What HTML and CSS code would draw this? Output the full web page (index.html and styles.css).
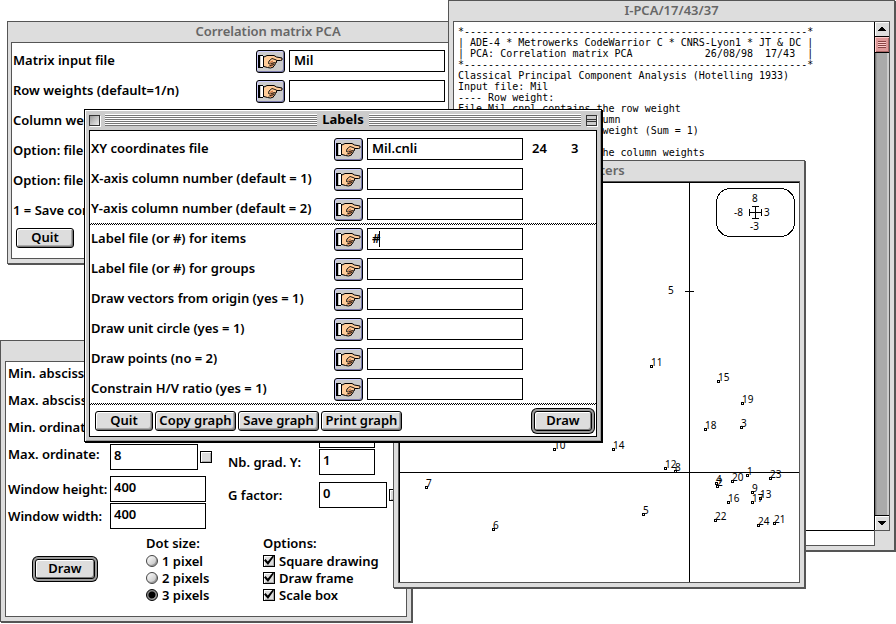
FILE: index.html
```html
<!DOCTYPE html>
<html lang="en">
<head>
<meta charset="utf-8">
<title>Labels</title>
<link rel="stylesheet" href="styles.css">
</head>
<body>
<svg class="defs" aria-hidden="true">
  <symbol id="hand" viewBox="0 0 25 15">
    <path fill="#000" d="M0 1h2v13h-2z"/>
    <path fill="#fff" d="M3 2h2v11h-2z"/>
    <path fill="#000" d="M2 1h3v1h-3zM2 13h3v1h-3zM5 2h1v11h-1z"/>
    <path fill="#ffcc99" stroke="#000" stroke-linejoin="round" d="M6 3L9 1.5H16L18.500 3L24 4V6L22.500 6.500H18.500V8.500L17 9.500V11L15.500 12V13L12.500 14L9.500 13.500L6 12.500"/>
    <path fill="none" stroke="#c63" d="M12 8.500L15 7M12.500 10.500L16 9M12 12.500L15 11.500"/>
    <path fill="none" stroke="#000" stroke-width=".9" d="M14 4.500L18.500 6M14 4.500L11 7L10.500 9.500L12 10M12.500 9.500L17.500 8.500M12 11.500L16 10.500M11.500 11.500L11 12.500"/>
  </symbol>
</svg>

<main class="desktop">

  <section class="window win-pca">
    <h2 class="titlebar">Correlation matrix PCA</h2>
    <div class="content form">
      <div class="row"><label for="a1">Matrix input file</label><button class="pick" aria-label="Choose matrix input file"><svg><use href="#hand"/></svg></button><input id="a1" type="text" value="Mil"></div>
      <div class="row"><label for="a2">Row weights (default=1/n)</label><button class="pick" aria-label="Choose row weights"><svg><use href="#hand"/></svg></button><input id="a2" type="text"></div>
      <div class="row"><span>Column weights</span></div>
      <div class="row"><span>Option: file for</span></div>
      <div class="row"><span>Option: file for</span></div>
      <div class="row"><span>1 = Save correlation</span></div>
      <div class="actions"><button class="btn">Quit</button></div>
    </div>
  </section>

  <section class="window win-log">
    <h2 class="titlebar">I-PCA/17/43/37</h2>
    <div class="content log">
      <pre>*---------------------------------------------------------*
| ADE-4 * Metrowerks CodeWarrior C * CNRS-Lyon1 * JT &amp; DC |
| PCA: Correlation matrix PCA            26/08/98  17/43  |
*---------------------------------------------------------*
Classical Principal Component Analysis (Hotelling 1933)
Input file: Mil
---- Row weight:
File Mil.cnpl contains the row weight
                     column
                        weight (Sum = 1)

                       the column weights</pre>
      <div class="scrollbar">
        <button class="arrow" aria-label="Scroll up"><svg viewBox="0 0 8 4"><path d="M3 0h2v1h1v1h1v1h1v1h-8v-1h1v-1h1v-1h1z"/></svg></button>
        <div class="thumb"></div>
        <div class="track"></div>
        <button class="arrow down" aria-label="Scroll down"><svg viewBox="0 0 8 4"><path d="M0 0h8v1h-1v1h-1v1h-1v1h-2v-1h-1v-1h-1v-1h-1z"/></svg></button>
      </div>
      <div class="status"></div>
      <div class="corner"></div>
    </div>
  </section>

  <section class="window win-options">
    <h2 class="titlebar"></h2>
    <div class="content">
      <div class="columns">
        <div class="col-left">
          <div class="opt top"><label for="d1">Min. abscissa:</label><input id="d1" class="box" type="text"></div>
          <div class="opt top"><label for="d2">Max. abscissa:</label><input id="d2" class="box" type="text"></div>
          <div class="opt top"><label for="d3">Min. ordinate:</label><input id="d3" class="box" type="text"></div>
          <div class="opt top"><label for="d4">Max. ordinate:</label><input id="d4" class="box" type="text" value="8"><input type="checkbox" class="check" aria-label="Fix maximum ordinate"></div>
          <div class="opt spaced"><label for="d5">Window height:</label><input id="d5" class="box wide" type="text" value="400"></div>
          <div class="opt"><label for="d6">Window width:</label><input id="d6" class="box wide" type="text" value="400"></div>
        </div>
        <div class="col-right">
          <div class="opt"><label for="d7">Nb. grad. X:</label><input id="d7" class="box small" type="text"></div>
          <div class="opt"><label for="d8">Nb. grad. Y:</label><input id="d8" class="box small" type="text" value="1"></div>
          <div class="opt spaced"><label for="d9">G factor:</label><input id="d9" class="box medium" type="text" value="0"><input type="checkbox" class="check" aria-label="Fix G factor"></div>
        </div>
      </div>
      <div class="choices">
        <button class="btn default roomy">Draw</button>
        <fieldset class="dots">
          <legend>Dot size:</legend>
          <label><input type="radio" name="dot" class="radio">1 pixel</label>
          <label><input type="radio" name="dot" class="radio">2 pixels</label>
          <label><input type="radio" name="dot" class="radio" checked>3 pixels</label>
        </fieldset>
        <fieldset>
          <legend>Options:</legend>
          <label><input type="checkbox" class="check" checked>Square drawing</label>
          <label><input type="checkbox" class="check" checked>Draw frame</label>
          <label><input type="checkbox" class="check" checked>Scale box</label>
        </fieldset>
      </div>
    </div>
  </section>

  <section class="window win-plot">
    <h2 class="titlebar">Scatters</h2>
    <div class="content">
      <svg class="plot" viewBox="0 0 400 400" role="img" aria-label="Scatter plot of the items">
        <g class="lines">
          <path d="M.5 400V.5H400M290.5 0V400M0 290.5H400M286 109.5h9"/>
          <rect x="317.5" y="6.5" width="78" height="48" rx="14"/>
          <path d="M350.5 30.5h12M350.5 27v7M362.5 27v7M356.5 24v13M353 24.5h7M353 36.5h7"/>
        </g>
        <text x="269" y="112">5</text>
        <text x="353" y="20">8</text>
        <text x="335" y="34">-8</text>
        <text x="365" y="34">3</text>
        <text x="351" y="48">-3</text>
        <g id="points"></g>
      </svg>
    </div>
  </section>

  <section class="window active win-labels">
    <div class="titlebar">
      <button class="close" aria-label="Close"></button>
      <span class="stripes"></span>
      <h2>Labels</h2>
      <span class="stripes"></span>
      <button class="shade" aria-label="Collapse"></button>
    </div>
    <div class="content form">
      <div class="row"><label for="e1">XY coordinates file</label><button class="pick" aria-label="Choose XY coordinates file"><svg><use href="#hand"/></svg></button><input id="e1" type="text" value="Mil.cnli"><span class="dims"><span>24</span><span>3</span></span></div>
      <div class="row"><label for="e2">X-axis column number (default = 1)</label><button class="pick" aria-label="Choose X-axis column"><svg><use href="#hand"/></svg></button><input id="e2" type="text"></div>
      <div class="row"><label for="e3">Y-axis column number (default = 2)</label><button class="pick" aria-label="Choose Y-axis column"><svg><use href="#hand"/></svg></button><input id="e3" type="text"></div>
      <hr>
      <div class="row"><label for="e4">Label file (or #) for items</label><button class="pick" aria-label="Choose item label file"><svg><use href="#hand"/></svg></button><span class="focused"><input id="e4" type="text" value="#"><i class="caret"></i></span></div>
      <div class="row"><label for="e5">Label file (or #) for groups</label><button class="pick" aria-label="Choose group label file"><svg><use href="#hand"/></svg></button><input id="e5" type="text"></div>
      <div class="row"><label for="e6">Draw vectors from origin (yes = 1)</label><button class="pick" aria-label="Choose vector option"><svg><use href="#hand"/></svg></button><input id="e6" type="text"></div>
      <div class="row"><label for="e7">Draw unit circle (yes = 1)</label><button class="pick" aria-label="Choose unit circle option"><svg><use href="#hand"/></svg></button><input id="e7" type="text"></div>
      <div class="row"><label for="e8">Draw points (no = 2)</label><button class="pick" aria-label="Choose point option"><svg><use href="#hand"/></svg></button><input id="e8" type="text"></div>
      <div class="row"><label for="e9">Constrain H/V ratio (yes = 1)</label><button class="pick" aria-label="Choose ratio option"><svg><use href="#hand"/></svg></button><input id="e9" type="text"></div>
      <hr>
      <div class="footer">
        <button class="btn">Quit</button>
        <button class="btn graph">Copy graph</button>
        <button class="btn graph">Save graph</button>
        <button class="btn graph">Print graph</button>
        <button class="btn default">Draw</button>
      </div>
    </div>
  </section>

</main>
<script src="plot.js"></script>
</body>
</html>
```
FILE: styles.css
```css
* { box-sizing: border-box; }

body {
  margin: 0;
  background: #fff;
  color: #000;
  font: 600 13px/16px "Noto Sans", "Open Sans", sans-serif;
}

button, input { font: inherit; color: inherit; margin: 0; }

.defs { position: absolute; width: 0; height: 0; }

.desktop {
  position: relative;
  min-height: 100vh;
  overflow: hidden;
}

/* Windows */
.window {
  position: absolute;
  padding: 0 4px 4px;
  background: #ddd;
  border: 1px solid #555;
  box-shadow: 1px 1px 0 #555;
}

.titlebar {
  display: flex;
  align-items: center;
  justify-content: center;
  height: 20px;
  margin: 0;
  padding-bottom: 2px;
  font-size: 13px;
  font-weight: 600;
  color: #666;
}

.content {
  background: #fff;
  border: 1px solid #555;
}

.win-pca { left: 7px; top: 21px; width: 523px; padding-left: 3px; }
.win-log { left: 448px; top: 0; width: 447px; }
.win-options { left: 0; top: 340px; width: 412px; }
.win-plot { left: 393px; top: 160px; width: 412px; }
.win-labels { left: 84px; top: 109px; width: 518px; }

.active {
  background: #ccc;
  border-color: #000;
  box-shadow: inset 1px 1px 0 #fff, inset -1px -1px 0 #999, 1px 1px 0 #000;
}
.active .content { border-color: #000; }
.active .titlebar { color: #000; gap: 5px; padding: 0; }
.active h2 { margin: 0; padding-bottom: 2px; font-size: 13px; font-weight: 700; }

.stripes {
  flex: 1;
  height: 12px;
  background: repeating-linear-gradient(#fff 0 1px, #777 1px 2px);
}

.close, .shade {
  width: 11px;
  height: 11px;
  padding: 0;
  border: 1px solid #333;
  background: linear-gradient(135deg, #999, #eee);
  box-shadow: 1px 1px 0 #fff;
}
.shade {
  background: linear-gradient(#ccc 3px, #333 3px 4px, #ccc 4px 5px, #333 5px 6px, #ccc 6px);
}

/* File form rows */
.form { padding: 3px 0 0 1px; }

.row {
  display: flex;
  align-items: center;
  height: 30px;
}
.row > label { width: 243px; white-space: nowrap; }
.row > label, .row > span:not(.focused) { padding-bottom: 2px; }

.row input {
  width: 156px;
  height: 22px;
  padding: 0 4px 2px;
  margin-left: 4px;
  border: 1px solid #000;
  border-radius: 0;
  background: #fff;
  outline: 0;
}

.pick {
  width: 29px;
  height: 23px;
  padding: 0;
  display: flex;
  align-items: center;
  justify-content: center;
  border: 1px solid #000;
  border-radius: 3px;
  background: #ccc;
  box-shadow: inset 1px 1px 0 #ccf, inset -1px -1px 0 #77a;
}
.pick svg { width: 25px; height: 15px; }

.focused { position: relative; display: flex; }
.caret {
  position: absolute;
  left: 16px;
  top: 3px;
  width: 1px;
  height: 16px;
  background: #000;
}

.dims { display: flex; gap: 24px; margin-left: 9px; }

hr {
  height: 2px;
  margin: -1px 0 -1px -1px;
  border: 0;
  background: repeating-conic-gradient(#000 0 25%, #fff 0 50%) 0 0 / 2px 2px;
}

.actions { padding: 2px 3px 10px; display: flex; }

.footer {
  display: flex;
  align-items: center;
  gap: 2px;
  padding: 4px 1px 2px 4px;
}
.footer .default { margin-left: auto; }

.btn {
  width: 58px;
  height: 20px;
  padding: 0 0 2px;
  white-space: nowrap;
  border: 1px solid #000;
  border-radius: 3px;
  background: #ddd;
  box-shadow: inset 1px 1px 0 #fff, inset -1px -1px 0 #777, inset -2px -2px 0 #aaa;
}
.graph { width: 81px; }
.default {
  margin: 3px;
  border-radius: 3px;
  box-shadow: inset 1px 1px 0 #fff, inset -1px -1px 0 #777, 0 0 0 2px #999, 0 0 0 3px #000;
}
.roomy { width: 60px; }

/* Log window */
.log {
  display: grid;
  grid-template-columns: 1fr 15px;
  grid-template-rows: 508px 15px;
}
.log pre {
  margin: 0;
  padding: 4px;
  font: 400 10px/11px "DejaVu Sans Mono", monospace;
}
.scrollbar {
  display: flex;
  flex-direction: column;
  border-left: 1px solid #000;
}
.arrow {
  height: 15px;
  padding: 0;
  display: flex;
  align-items: center;
  justify-content: center;
  border: 0;
  border-bottom: 1px solid #000;
  background: #ddd;
  box-shadow: inset 1px 1px 0 #fff;
}
.arrow.down { border-bottom: 0; border-top: 1px solid #000; }
.arrow svg { width: 8px; height: 4px; shape-rendering: crispEdges; }
.thumb {
  height: 16px;
  border-bottom: 1px solid #000;
  background:
    repeating-linear-gradient(#844 0 1px, #fcc 1px 2px) 3px 4px / 8px 7px no-repeat,
    #d99;
  box-shadow: inset 1px 1px 0 #fcc, inset -1px -1px 0 #a66;
}
.track {
  flex: 1;
  background: linear-gradient(90deg, #777 1px, #999 1px 2px, #aaa 2px 12px, #ccc 12px);
}
.status { border-top: 1px solid #000; }
.corner {
  margin: 0 -1px -1px 0;
  background: #ddd;
  border: solid #555;
  border-width: 1px 0 0 1px;
}

/* Drawing options window */
.columns { display: flex; padding-top: 1px; }
.col-left { width: 222px; padding-left: 2px; }
.col-right {
  display: flex;
  flex-direction: column;
  justify-content: flex-end;
  padding-bottom: 21px;
}
.opt {
  display: flex;
  align-items: center;
  height: 26px;
  margin-bottom: 1px;
}
.opt label { width: 102px; white-space: nowrap; }
.opt.top label { align-self: flex-start; line-height: 20px; }
.col-right label { width: 91px; }
.opt.spaced { margin-top: 6px; }

.box {
  width: 88px;
  height: 26px;
  padding: 0 3px 5px;
  border: 1px solid #000;
  border-radius: 0;
  background: #fff;
}
.box.wide { width: 96px; }
.box.small { width: 56px; }
.box.medium { width: 68px; }
.opt .check { margin-left: 2px; }

.choices { display: flex; padding: 5px 0 13px 26px; }
.choices .btn { align-self: center; margin: 0 51px 0 3px; }

fieldset { margin: 0; padding: 0; border: 0; min-width: 0; }
legend { padding: 0; line-height: 17px; }
fieldset label {
  display: flex;
  align-items: center;
  gap: 4px;
  height: 17px;
  white-space: nowrap;
}
.dots { width: 117px; }

.check, .radio {
  appearance: none;
  flex: none;
  width: 12px;
  height: 12px;
  border: 1px solid #000;
  background: #ddd;
  box-shadow: inset 1px 1px 0 #fff, inset -1px -1px 0 #aaa;
}
.check:checked::before {
  content: "";
  display: block;
  width: 10px;
  height: 10px;
  background: #000;
  clip-path: polygon(0 50%, 15% 35%, 38% 60%, 88% 0, 100% 10%, 40% 95%);
}
.radio {
  border-radius: 50%;
  border-color: #444;
  background: linear-gradient(135deg, #fff, #bbb);
  box-shadow: inset -1px -1px 0 #999;
}
.radio:checked { background: radial-gradient(#000 0 3px, #888 4px); border-color: #000; }

/* Scatter plot */
.plot { display: block; width: 100%; }
.plot text { font: 400 10px "Noto Sans", sans-serif; }
.lines, .dot { fill: none; stroke: #000; shape-rendering: crispEdges; }
```
FILE: plot.js
```js
// Item number, then its position on the 400 x 400 plane.
const items = [
  [1, 348, 293], [2, 318, 304], [3, 342, 245], [4, 317, 301],
  [5, 244, 332], [6, 94, 347], [7, 27, 305], [8, 276, 289],
  [9, 353, 310], [10, 155, 267], [11, 252, 184], [12, 266, 286],
  [13, 361, 316], [14, 214, 267], [15, 319, 199], [16, 329, 320],
  [17, 353, 320], [18, 306, 247], [19, 343, 221], [20, 333, 299],
  [21, 375, 341], [22, 316, 338], [23, 371, 296], [24, 359, 343]
];

const ns = "http://www.w3.org/2000/svg";
const layer = document.getElementById("points");

for (const [label, x, y] of items) {
  const dot = document.createElementNS(ns, "rect");
  dot.setAttribute("class", "dot");
  dot.setAttribute("x", x - 0.5);
  dot.setAttribute("y", y - 0.5);
  dot.setAttribute("width", 2);
  dot.setAttribute("height", 2);
  const text = document.createElementNS(ns, "text");
  text.setAttribute("x", x);
  text.setAttribute("y", y);
  text.textContent = label;
  layer.append(dot, text);
}
```
